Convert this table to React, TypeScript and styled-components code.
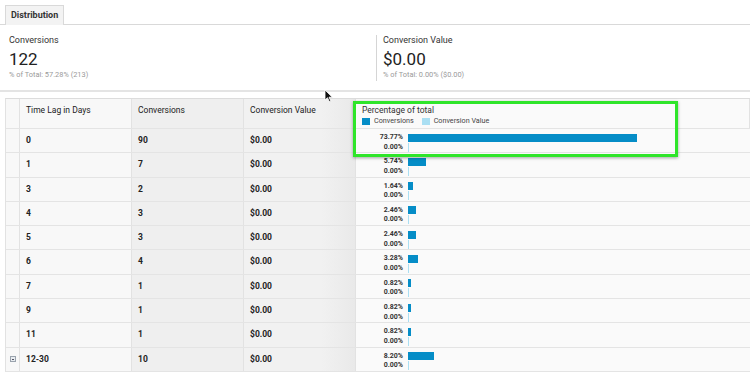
import React from "react";
import styled, { createGlobalStyle } from "styled-components";

const GlobalStyle = createGlobalStyle`
  body {
    margin: 0;
    background: #fff;
    font-family: Roboto, "Liberation Sans", Arial, sans-serif;
    color: #222;
  }
`;

const rows = [
    { lag: "0", conv: 90, pct: 73.77 },
    { lag: "1", conv: 7, pct: 5.74 },
    { lag: "3", conv: 2, pct: 1.64 },
    { lag: "4", conv: 3, pct: 2.46 },
    { lag: "5", conv: 3, pct: 2.46 },
    { lag: "6", conv: 4, pct: 3.28 },
    { lag: "7", conv: 1, pct: 0.82 },
    { lag: "9", conv: 1, pct: 0.82 },
    { lag: "11", conv: 1, pct: 0.82 },
    { lag: "12-30", conv: 10, pct: 8.2, expandable: true },
];

const BAR_SCALE = 3.11; // px per percent

const Page = styled.div`
    position: relative;
    width: 750px;
    height: 373px;
    overflow: hidden;
`;

const TabBar = styled.div`
    display: flex;
    height: 25px;
    padding: 5px 0 0 5px;
    box-sizing: border-box;
    border-bottom: 1px solid #d9d9d9;
`;

const Tab = styled.div`
    height: 20px;
    line-height: 19px;
    padding: 0 5px;
    box-sizing: border-box;
    background: #f3f3f3;
    border: 1px solid #d9d9d9;
    border-bottom: none;
    font-size: 9px;
    font-weight: 700;
    color: #333;
`;

const Metrics = styled.div`
    display: grid;
    grid-template-columns: 376px 1fr;
    height: 65px;
`;

const Metric = styled.div<{ $divided?: boolean }>`
    margin-top: 10px;
    height: 46px;
    padding-left: ${p => (p.$divided ? "6px" : "9px")};
    border-left: ${p => (p.$divided ? "1px solid #d5d5d5" : "none")};
`;

const MetricLabel = styled.div`
    font-size: 9px;
    line-height: 10px;
    color: #333;
`;

const MetricValue = styled.div`
    font-size: 17px;
    line-height: 22px;
    margin-top: 3px;
    color: #222;
`;

const MetricSub = styled.div`
    font-size: 7.4px;
    line-height: 9px;
    color: #9a9a9a;
`;

const Divider = styled.div`
    height: 6px;
    border-top: 2px solid #e4e4e4;
`;

const Table = styled.div`
    position: relative;
    margin-left: 5px;
    border-top: 1px solid #dcdcdc;
    border-left: 1px solid #e2e2e2;
`;

const Row = styled.div<{ $head?: boolean }>`
    display: grid;
    grid-template-columns: 14px 112px 112px 112px 1fr;
    height: ${p => (p.$head ? "30px" : "24.3px")};
    box-sizing: border-box;
    border-bottom: 1px solid #e4e4e4;
`;

const tones: Record<string, string> = {
    light: "#f8f8f8",
    mid: "#efefef",
    sorted: "linear-gradient(to right, #f1f1f1 70%, #e9e9e9)",
    pale: "#fafafa",
};

const Cell = styled.div<{ $tone: string; $bold?: boolean }>`
    background: ${p => tones[p.$tone]};
    border-right: 1px solid #e2e2e2;
    padding: 6px 0 0 6px;
    font-size: 8.5px;
    line-height: 10px;
    font-weight: ${p => (p.$bold ? 700 : 400)};
    color: #222;
    overflow: hidden;
    white-space: nowrap;
`;

const IconCell = styled.div`
    background: #f8f8f8;
    border-right: 1px solid #e2e2e2;
    display: flex;
    align-items: center;
    justify-content: center;
`;

const ExpandBox = styled.div`
    width: 4px;
    height: 4px;
    border: 1px solid #9aa3ad;
    background: #e8ecf0;
    position: relative;
    &::after {
        content: "";
        position: absolute;
        left: 1px;
        top: 1.5px;
        width: 2px;
        height: 1px;
        background: #556;
    }
`;

const HeadTitle = styled.div`
    font-size: 8.5px;
    line-height: 10px;
    color: #333;
`;

const Legend = styled.div`
    display: flex;
    align-items: center;
    margin-top: 1px;
    font-size: 7.2px;
    color: #444;
`;

const Swatch = styled.span<{ $color: string }>`
    display: inline-block;
    width: 8px;
    height: 7px;
    background: ${p => p.$color};
    margin-right: 4px;
`;

const LegendItem = styled.span`
    display: flex;
    align-items: center;
    margin-right: 8px;
`;

const PctCell = styled.div`
    background: #fafafa;
    display: flex;
    gap: 5px;
    padding-top: 4px;
`;

const PctLabels = styled.div`
    width: 47px;
    text-align: right;
    font-size: 7px;
    line-height: 9.5px;
    font-weight: 700;
    color: #333;
`;

const Bars = styled.div`
    display: flex;
    flex-direction: column;
    padding-top: 0.5px;
`;

const Bar = styled.div`
    height: 8px;
    background: #058dc7;
`;

const ValueBar = styled.div`
    height: 9px;
    width: 1px;
    margin-top: 1px;
    background: #aadff3;
`;

const Highlight = styled.div`
    position: absolute;
    left: 347px;
    top: 2px;
    width: 319px;
    height: 50px;
    border: 3px solid #2fe52a;
    box-shadow: 0 1px 3px rgba(0, 0, 0, 0.35);
    pointer-events: none;
`;

const Cursor = styled.svg`
    position: absolute;
    left: 324px;
    top: 89px;
`;

export default function App() {
    return (
        <Page>
            <GlobalStyle />
            <TabBar>
                <Tab>Distribution</Tab>
            </TabBar>
            <Metrics>
                <Metric>
                    <MetricLabel>Conversions</MetricLabel>
                    <MetricValue>122</MetricValue>
                    <MetricSub>% of Total: 57.28% (213)</MetricSub>
                </Metric>
                <Metric $divided>
                    <MetricLabel>Conversion Value</MetricLabel>
                    <MetricValue>$0.00</MetricValue>
                    <MetricSub>% of Total: 0.00% ($0.00)</MetricSub>
                </Metric>
            </Metrics>
            <Divider />
            <Table>
                <Row $head>
                    <IconCell />
                    <Cell $tone="light">Time Lag in Days</Cell>
                    <Cell $tone="mid">Conversions</Cell>
                    <Cell $tone="sorted">Conversion Value</Cell>
                    <Cell $tone="pale">
                        <HeadTitle>Percentage of total</HeadTitle>
                        <Legend>
                            <LegendItem><Swatch $color="#058dc7" />Conversions</LegendItem>
                            <LegendItem><Swatch $color="#aadff3" />Conversion Value</LegendItem>
                        </Legend>
                    </Cell>
                </Row>
                {rows.map(r => (
                    <Row key={r.lag}>
                        <IconCell>{r.expandable && <ExpandBox />}</IconCell>
                        <Cell $tone="light" $bold>{r.lag}</Cell>
                        <Cell $tone="mid" $bold>{r.conv}</Cell>
                        <Cell $tone="sorted" $bold>$0.00</Cell>
                        <PctCell>
                            <PctLabels>
                                <div>{r.pct.toFixed(2)}%</div>
                                <div>0.00%</div>
                            </PctLabels>
                            <Bars>
                                <Bar style={{ width: Math.max(2, r.pct * BAR_SCALE) }} />
                                <ValueBar />
                            </Bars>
                        </PctCell>
                    </Row>
                ))}
                <Highlight />
            </Table>
            <Cursor width="10" height="14" viewBox="0 0 10 14">
                <path d="M1 1 L1 11 L3.5 8.7 L5.3 12.6 L6.8 11.9 L5 8.2 L8.3 8.2 Z" fill="#111" stroke="#fff" strokeWidth="0.8" />
            </Cursor>
        </Page>
    );
}
